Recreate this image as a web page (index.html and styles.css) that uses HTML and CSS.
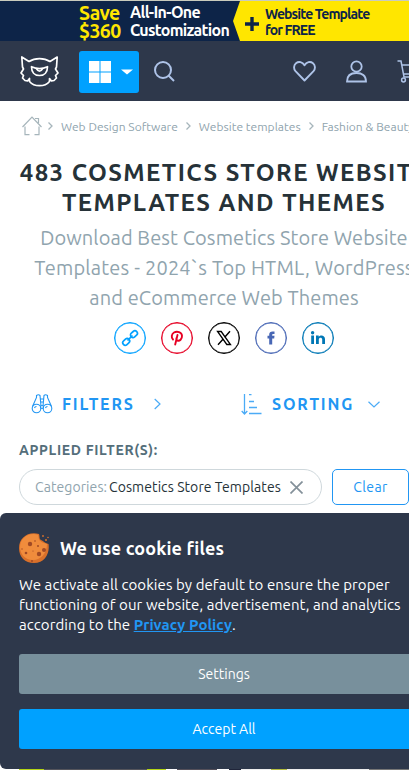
FILE: index.html
```
<!DOCTYPE html>
<html lang="en">
<head>
<meta charset="utf-8">
<meta name="viewport" content="width=device-width, initial-scale=1">
<title>Cosmetics Store Website Templates</title>
<link rel="stylesheet" href="styles.css">
</head>
<body>
<div class="page">
  <div class="promo">
    <div class="promo-save"><span>Save</span><span>$360</span></div>
    <div class="promo-title"><span class="promo-all">All-In-One</span><span class="promo-custom">Customization</span></div>
    <div class="promo-offer">
      <svg class="promo-plus" width="14" height="14" viewBox="0 0 14 14"><path d="M5.300 0h3.400v5.300H14v3.400H8.700V14h-3.400V8.700H0v-3.400h5.300z" fill="#0d2448"/></svg>
      <div class="promo-free"><span class="promo-web">Website Template</span><span class="promo-for">for FREE</span></div>
    </div>
  </div>
  <header class="header">
    <svg class="logo" width="40" height="32" viewBox="0 0 40 32" fill="none" stroke="#fff" stroke-width="1.700" stroke-linejoin="round" stroke-linecap="round">
      <path d="M9 6.500L1.800 2L2.500 12L3.500 14L1 18L3.500 20.500L2.500 23L5 25.500L7.500 26L9.500 23.500V26.500C12 29.500 15.500 30.700 19.500 30.700S27 29.500 29.500 26.500V23.500L31.500 26L34 25.500L36.500 23L35.500 20.500L38 18L35.500 14L36.500 12L37.200 2L30 6.500C24 2.700 15 2.700 9 6.500Z"/>
      <path d="M11.500 11.700C16.500 14 22.500 14 27.500 11.700C27.500 17 24.500 20.500 19.500 20.500S11.500 17 11.500 11.700Z"/><path d="M16.500 13.700Q19.500 18.500 22.500 13.700"/>
    </svg>
    <button class="menu" aria-label="Menu">
      <svg width="22" height="22" viewBox="0 0 22 22" fill="#fff"><path d="M0 0h10.500v10.500H0zM11.500 0H22v10.500H11.500zM0 11.500h10.500V22H0zM11.500 11.500H22V22H11.500z"/></svg>
      <svg width="12" height="6" viewBox="0 0 12 6" fill="#fff"><path d="M0 .5h12L6 5.500z"/></svg>
    </button>
    <svg class="search" width="21" height="21" viewBox="0 0 21 21" fill="none" stroke="#aec3e8" stroke-width="2"><circle cx="9" cy="9" r="8"/><path d="M14.500 14.500L20 20"/></svg>
    <svg class="heart" width="23" height="21" viewBox="0 0 23 21" fill="none" stroke="#aec3e8" stroke-width="1.900" stroke-linejoin="round"><path d="M11.500 19.500L2.500 10.200C.4 7.800.7 4 3 2.200C5.700 0 9.500.8 11.500 4.200C13.500.8 17.300 0 20 2.200C22.300 4 22.600 7.800 20.500 10.200Z"/></svg>
    <svg class="user" width="21" height="23" viewBox="0 0 21 23" fill="none" stroke="#aec3e8" stroke-width="1.800"><circle cx="10.500" cy="6.500" r="5.200"/><path d="M1 21.500C1 15.500 5 13 10.500 13S20 15.500 20 21.500Z"/></svg>
    <svg class="cart" width="26" height="23" viewBox="0 0 26 23" fill="none" stroke="#aec3e8" stroke-width="1.500"><path d="M.5 1H4L7 17H22M4.800 5H25L22 14H6.500"/><circle cx="6.500" cy="20" r="1.900"/><circle cx="20" cy="20" r="1.900"/></svg>
  </header>
  <main>
    <nav class="crumbs">
      <svg class="home" width="20" height="20" viewBox="0 0 20 20" fill="none" stroke="#a6b5bb" stroke-width="1.200"><path d="M.5 11L10 1L19.500 11M3 10.500V18.700H7.500M17 10.500V18.700H12.500M13 2.500H16.500V7"/></svg>
      <svg class="sep sep-a" width="5" height="8" viewBox="0 0 5 8"><path d="M.5.5L4 4L.5 7.500"/></svg>
      <a class="crumb-a">Web Design Software</a>
      <svg class="sep" width="5" height="8" viewBox="0 0 5 8"><path d="M.5.5L4 4L.5 7.500"/></svg>
      <a class="crumb-b">Website templates</a>
      <svg class="sep" width="5" height="8" viewBox="0 0 5 8"><path d="M.5.5L4 4L.5 7.500"/></svg>
      <a class="crumb-c">Fashion &amp; Beauty</a>
    </nav>
    <h1><span class="h-a">483 COSMETICS STORE WEBSITE</span><span class="h-b">TEMPLATES AND THEMES</span></h1>
    <p class="lead"><span class="l-a">Download Best Cosmetics Store Website</span><span class="l-b">Templates - 2024`s Top HTML, WordPress</span><span class="l-c">and eCommerce Web Themes</span></p>
    <div class="share">
      <a class="ring link"><svg width="18" height="18" viewBox="0 0 18 18" fill="none" stroke="currentColor" stroke-width="1.700"><rect x="9" y="2.800" width="7.500" height="5" rx="2.500" transform="rotate(-42 12.700 5)"/><rect x="1.600" y="10.300" width="7.500" height="5" rx="2.500" transform="rotate(-42 5.300 13)"/><path d="M6.500 11.500L11.500 6.500"/></svg></a>
      <a class="ring pin"><svg width="16" height="16" viewBox="0 0 16 16" fill="none" stroke="currentColor" stroke-width="1.900" stroke-linecap="round"><path d="M4 9.500C2 7.500 2.500 4 5 2.500C8 .8 12.800 2 13 5.800C13.200 9 10.500 11.500 8.500 10.600C7.300 10 7.200 9 7.500 8M8.500 5L6.200 14.500"/></svg></a>
      <a class="ring x"><svg width="16" height="16" viewBox="0 0 16 16" fill="none" stroke="currentColor"><path d="M1.500 1.500H5.200L14.500 14.500H10.800Z" stroke-width="1.300"/><path d="M14 1.200L8.700 7.200M7.200 9L2 14.800" stroke-width="1.400"/></svg></a>
      <a class="ring fb"><svg width="16" height="16" viewBox="0 0 16 16" fill="currentColor"><path d="M6.200 14.500V8.500H4.500V5.800H6.200V4.500C6.200 2.500 7.500 1.500 9.500 1.500H11.500V4H10.200C9.500 4 9.200 4.300 9.200 5V5.800H11.500L11.200 8.500H9.200V14.500Z"/></svg></a>
      <a class="ring in"><svg width="16" height="16" viewBox="0 0 16 16" fill="currentColor"><circle cx="2.600" cy="2.700" r="1.700"/><path d="M1.200 5.500H4V14H1.200zM6 5.500H8.700V6.700C10.500 4.500 15 5 15 9V14H12.200V9.500C12.200 7 8.800 7 8.800 9.500V14H6z"/></svg></a>
    </div>
    <div class="tools">
      <a class="tool tool-filter">
        <svg width="22" height="20" viewBox="0 0 22 20" fill="none" stroke="#2196f3" stroke-width="1.100"><circle cx="5.500" cy="14.500" r="4.300"/><circle cx="16.500" cy="14.500" r="4.300"/><circle cx="11" cy="13" r="1.500"/><path d="M1.500 12.500L5.500 3.500V1.500Q7.500 0 9 1.500L10 12M20.500 12.500L16.500 3.500V1.500Q14.500 0 13 1.500L12 12M9 5H13M9.500 8H12.500M3.500 14Q4 12.500 5.500 12.500M14.500 14Q15 12.500 16.500 12.500"/></svg>
        <span>FILTERS</span>
        <svg class="chev-r" width="7" height="12" viewBox="0 0 7 12" fill="none" stroke="#4babf6" stroke-width="1.200"><path d="M.7 1L6 6L.7 11"/></svg>
      </a>
      <a class="tool tool-sort">
        <svg width="21" height="21" viewBox="0 0 21 21" fill="none" stroke="#4babf6" stroke-width="1.300"><path d="M3.500 0V19M.7 17L3.500 20L6.300 17M8 .7H10.500M8 7.500H13M8 13.500H16M8 19.500H20.500"/></svg>
        <span>SORTING</span>
        <svg class="chev-d" width="12" height="7" viewBox="0 0 12 7" fill="none" stroke="#4babf6" stroke-width="1.200"><path d="M.5.7L6 6L11.500.7"/></svg>
      </a>
    </div>
    <h2>APPLIED FILTER(S):</h2>
    <div class="applied">
      <div class="chip"><span class="chip-key">Categories:</span><span class="chip-val">Cosmetics Store Templates</span><svg width="13" height="13" viewBox="0 0 13 13" stroke="#84919a" stroke-width="1.700"><path d="M.5.5L12.500 12.500M12.500.5L.5 12.500"/></svg></div>
      <button class="clear">Clear</button>
    </div>
  </main>
  <section class="cookie">
    <div class="cookie-head">
      <svg width="30" height="30" viewBox="0 0 30 30"><path d="M20 1C21 4 20 6 22 7C25 8 25 10 29.500 11C31 20 26 30 15 30C6 30 0 24 0 15C0 5 9-2 20 1Z" fill="#d9702a"/><path d="M19 1.800C20 4 19 7 22 8.500C24 10 26 10 28 11C28 20 22 27 14 27C6 27 1 21 1 14C1 5 10-1 19 1.800Z" fill="#f08c3c"/><g fill="#a04a25"><circle cx="11" cy="11" r="2.200"/><circle cx="25" cy="17" r="2"/><circle cx="20" cy="21" r="2.200"/><circle cx="7" cy="20" r="1.300"/><circle cx="19" cy="13" r="1"/><circle cx="16" cy="8" r=".8"/><circle cx="13" cy="28" r="1"/><circle cx="3" cy="16" r=".7"/><circle cx="14" cy="18" r=".6"/></g><g fill="#d9702a"><circle cx="24" cy="3" r=".9"/><circle cx="29" cy="4.500" r=".8"/><circle cx="27" cy="7" r="1"/></g></svg>
      <strong>We use cookie files</strong>
    </div>
    <p><span class="c-a">We activate all cookies by default to ensure the proper</span><span class="c-b">functioning of our website, advertisement, and analytics</span><span class="c-c">according to the <a>Privacy Policy</a>.</span></p>
    <button class="settings">Settings</button>
    <button class="accept">Accept All</button>
  </section>
  <div class="thumbs"></div>
</div>
</body>
</html>
```
FILE: styles.css
```
* { box-sizing: border-box; }
html, body { margin: 0; overflow: hidden; }
body { width: 409px; height: 770px; background: #fff; font-family: "Ubuntu", "Noto Sans", "Open Sans", sans-serif; color: #263238; }
button { font: inherit; border: 0; padding: 0; margin: 0; }
svg { display: block; flex: none; }
span, a, strong { white-space: nowrap; }
.page { width: 448px; height: 770px; display: flex; flex-direction: column; overflow: hidden; }

.promo { height: 41px; border-top: 1px solid #c9cbbd; background: #0d2448; display: flex; flex: none; font-weight: 600; color: #fff; padding-left: 79px; }
.promo-save, .promo-title, .promo-free { display: flex; flex-direction: column; align-items: flex-start; }
.promo-save { width: 51px; padding-top: 4px; color: #ffe600; font-size: 19.500px; line-height: 17.500px; letter-spacing: -0.600px; }
.promo-title { width: 103px; padding-top: 2px; font-size: 16px; line-height: 18px; letter-spacing: -0.700px; }
.promo-offer { flex: 1; display: flex; background: #ffe600; clip-path: polygon(7px 0, 100% 0, 100% 100%, 7px 100%, 0 50%); color: #0d2448; }
.promo-plus { margin: 16px 6px 0 12px; }
.promo-free { padding-top: 5px; font-size: 14px; line-height: 16px; letter-spacing: -0.900px; }

.header { height: 60px; flex: none; display: flex; align-items: center; background: #2e384b; padding-left: 20px; }
.menu { width: 60px; height: 42px; margin: 2px 15px 0 19px; border-radius: 3px; background: #00a1ff; display: flex; align-items: center; padding-left: 10px; gap: 10px; }
.heart { margin-left: 117.500px; }
.user { margin-left: 30px; }
.cart { margin-left: 30.500px; }

.crumbs { height: 50px; display: flex; align-items: center; padding-left: 22px; font-size: 12px; letter-spacing: 0.030px; color: #90a4ae; }
.sep { margin: 0 8px; fill: none; stroke: #a6b5bb; stroke-width: 1.300; }
.sep-a { margin-left: 6px; }
.home { margin-top: -1px; }

h1 { margin: 7px 0 0; display: flex; flex-direction: column; align-items: center; font-size: 24px; line-height: 30px; font-weight: 700; letter-spacing: 1.430px; color: #263238; }
.lead { margin: 5px 0 0; display: flex; flex-direction: column; align-items: center; font-size: 20px; line-height: 30px; color: #90a4ae; letter-spacing: 0.100px; }
.l-b { letter-spacing: 0.200px; }

.share { margin-top: 9px; display: flex; justify-content: center; gap: 15px; }
.ring { width: 32px; height: 32px; border: 1.500px solid currentColor; border-radius: 50%; display: flex; align-items: center; justify-content: center; box-shadow: inset 0 0 0 0.400px currentColor; }
.link { color: #03a1ff; }
.pin { color: #e60023; }
.x { color: #000; }
.fb { color: #4867b5; }
.in { color: #0077b5; }

.tools { display: flex; margin-top: 38px; height: 24px; color: #2196f3; font-size: 16px; font-weight: 700; letter-spacing: 1.800px; }
.tool { display: flex; align-items: center; line-height: 24px; }
.tool-filter { padding-left: 31px; width: 241px; gap: 9px; }
.tool-sort { gap: 10px; }
.chev-r { margin-left: 10px; }
.chev-d { margin-left: 4px; }

h2 { margin: 24px 0 0 19px; font-size: 14px; line-height: 20px; letter-spacing: 0.670px; font-weight: 700; color: #546e7a; }
.applied { display: flex; gap: 10px; margin: 9px 0 0 19px; height: 36px; font-size: 14px; }
.chip { width: 303px; border: 1px solid #cfd8dc; border-radius: 18px; display: flex; align-items: center; padding-left: 15px; line-height: 18px; letter-spacing: 0.080px; }
.chip-key { width: 74px; color: #90a4ae; letter-spacing: 0.080px; }
.chip-val { width: 181px; color: #263238; }
.clear { width: 77px; border: 1px solid #2196f3; border-radius: 5px; background: #fff; color: #2196f3; letter-spacing: 0.400px; }

.cookie { margin-top: 8px; height: 256px; flex: none; padding: 20px 0 0 19px; border-radius: 6px; background: #2e384b; color: #fff; font-size: 15px; }
.cookie-head { display: flex; align-items: center; gap: 11px; height: 30px; font-size: 18px; letter-spacing: 0.130px; }
.cookie p { margin: 12px 0 19px; display: flex; flex-direction: column; align-items: flex-start; line-height: 20px; letter-spacing: 0.080px; }
.cookie a { color: #2196f3; font-weight: 700; text-decoration: underline; }
.cookie button { display: block; width: 410px; height: 40px; border-radius: 3px; color: #fff; font-size: 14px; }
.cookie .settings { background: #78909c; margin-bottom: 15px; }
.cookie .accept { background: #00a1ff; }
.thumbs { height: 1px; flex: none; margin-left: 19px; background: linear-gradient(90deg, #b5d516 0 25px, #55555c 25px 128px, #b5d516 128px 147px, #fff 147px 158px, #55505a 158px 198px, #fff 198px 210px, #20253a 210px 222px, #eee 222px 252px, #b5bd40 252px 268px, #eee 268px 350px, #777 350px); }
```
